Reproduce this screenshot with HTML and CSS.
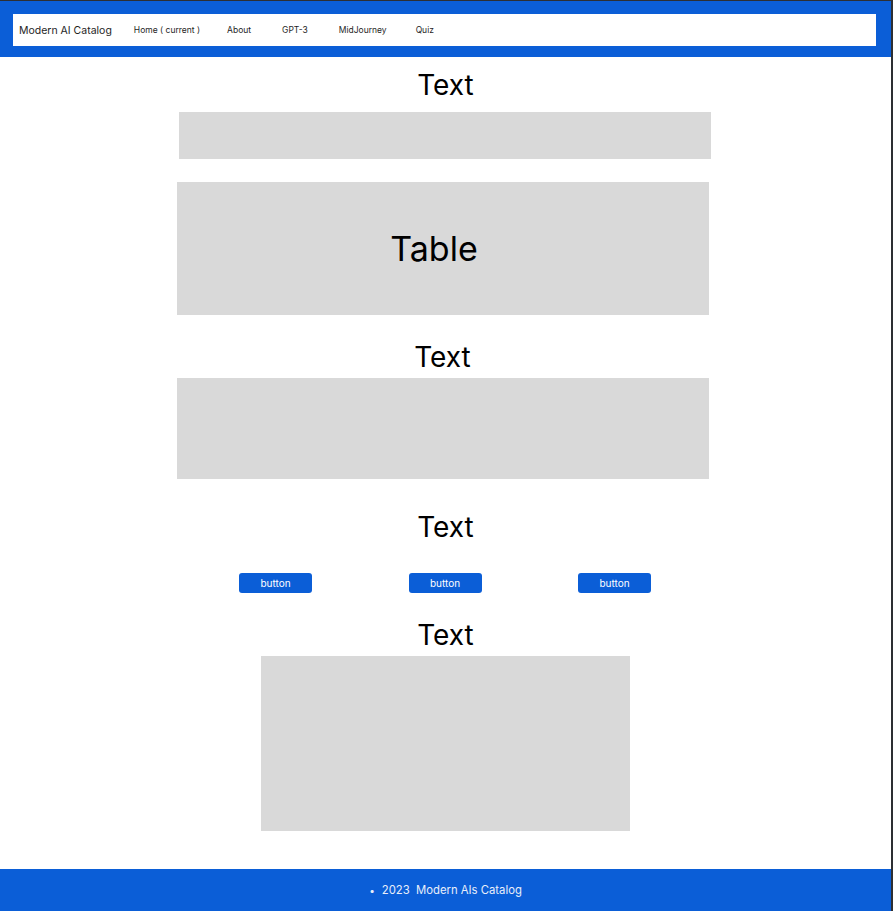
FILE: index.html
```html
<!DOCTYPE html>
<html lang="en">
<head>
<meta charset="utf-8">
<title>Modern AI Catalog</title>
<link rel="stylesheet" href="styles.css">
</head>
<body>
<div class="page">
  <header class="header">
    <nav class="navbar">
      <span class="brand">Modern AI Catalog</span>
      <ul class="nav">
        <li class="nav-item nav-home">Home ( current )</li>
        <li class="nav-item nav-about">About</li>
        <li class="nav-item nav-gpt">GPT-3</li>
        <li class="nav-item nav-mid">MidJourney</li>
        <li class="nav-item nav-quiz">Quiz</li>
      </ul>
    </nav>
  </header>

  <main class="main">
    <h2 class="heading h1">Text</h2>
    <div class="box box-intro"></div>

    <div class="box box-table"><span class="table-label">Table</span></div>

    <h2 class="heading h2">Text</h2>
    <div class="box box-text"></div>

    <h2 class="heading h3">Text</h2>
    <div class="buttons">
      <button class="btn">button</button>
      <button class="btn">button</button>
      <button class="btn">button</button>
    </div>

    <h2 class="heading h4">Text</h2>
    <div class="box box-media"></div>
  </main>

  <footer class="footer">
    <span class="bullet">•</span>
    <span>2023&nbsp; Modern AIs Catalog</span>
  </footer>
</div>
</body>
</html>
```

FILE: styles.css
```css
html {
  background: #2d2f33;
  margin: 0;
  padding: 0;
}

body {
  margin: 0;
  padding: 1px 0 0 0;
  width: 891px;
  font-family: Inter, "Noto Sans", sans-serif;
  color: #000;
}

.page {
  background: #ffffff;
  display: flex;
  flex-direction: column;
  min-height: 910px;
}

.header {
  background: #0b5ed7;
  padding: 13px 15px 11px 13px;
}

.navbar {
  background: #ffffff;
  height: 32px;
  display: flex;
  align-items: center;
  padding-left: 6px;
}

.brand {
  font-size: 10.5px;
  color: #1e1e1e;
  margin-right: 22px;
}

.nav {
  list-style: none;
  display: flex;
  align-items: center;
  margin: 0;
  padding: 0;
}

.nav-item {
  font-size: 8.5px;
  color: #1e1e1e;
}

.nav-about { margin-left: 27px; }
.nav-gpt { margin-left: 31px; }
.nav-mid { margin-left: 31px; }
.nav-quiz { margin-left: 29px; }

.main {
  display: flex;
  flex-direction: column;
  align-items: flex-start;
  flex: 1;
}

.heading {
  font-size: 28px;
  font-weight: 400;
  line-height: 34px;
  margin: 0;
  width: 891px;
  text-align: center;
}

.h1 { margin-top: 11px; }
.h2 { margin-top: 25px; width: 885px; }
.h3 { margin-top: 31px; }
.h4 { margin-top: 25px; }

.box {
  background: #d9d9d9;
}

.box-intro {
  width: 532px;
  height: 47px;
  margin: 10px 0 0 179px;
}

.box-table {
  width: 532px;
  height: 133px;
  margin: 23px 0 0 177px;
  display: flex;
  align-items: center;
  justify-content: center;
}

.table-label {
  font-size: 34px;
  line-height: 40px;
  margin-left: -18px;
}

.box-text {
  width: 532px;
  height: 101px;
  margin: 4px 0 0 177px;
}

.buttons {
  display: flex;
  gap: 96.5px;
  margin: 29px 0 0 239px;
}

.btn {
  width: 73px;
  height: 20px;
  border: none;
  border-radius: 3px;
  background: #0b5ed7;
  color: #ffffff;
  font-family: Inter, "Noto Sans", sans-serif;
  font-size: 10px;
  padding: 0;
}

.box-media {
  width: 369px;
  height: 175px;
  margin: 4px 0 0 261px;
}

.footer {
  background: #0b5ed7;
  height: 42px;
  margin-top: 38px;
  display: flex;
  align-items: center;
  justify-content: center;
  gap: 7px;
  color: #e8eefa;
  font-size: 11.3px;
}

.bullet {
  font-size: 10px;
}
```
